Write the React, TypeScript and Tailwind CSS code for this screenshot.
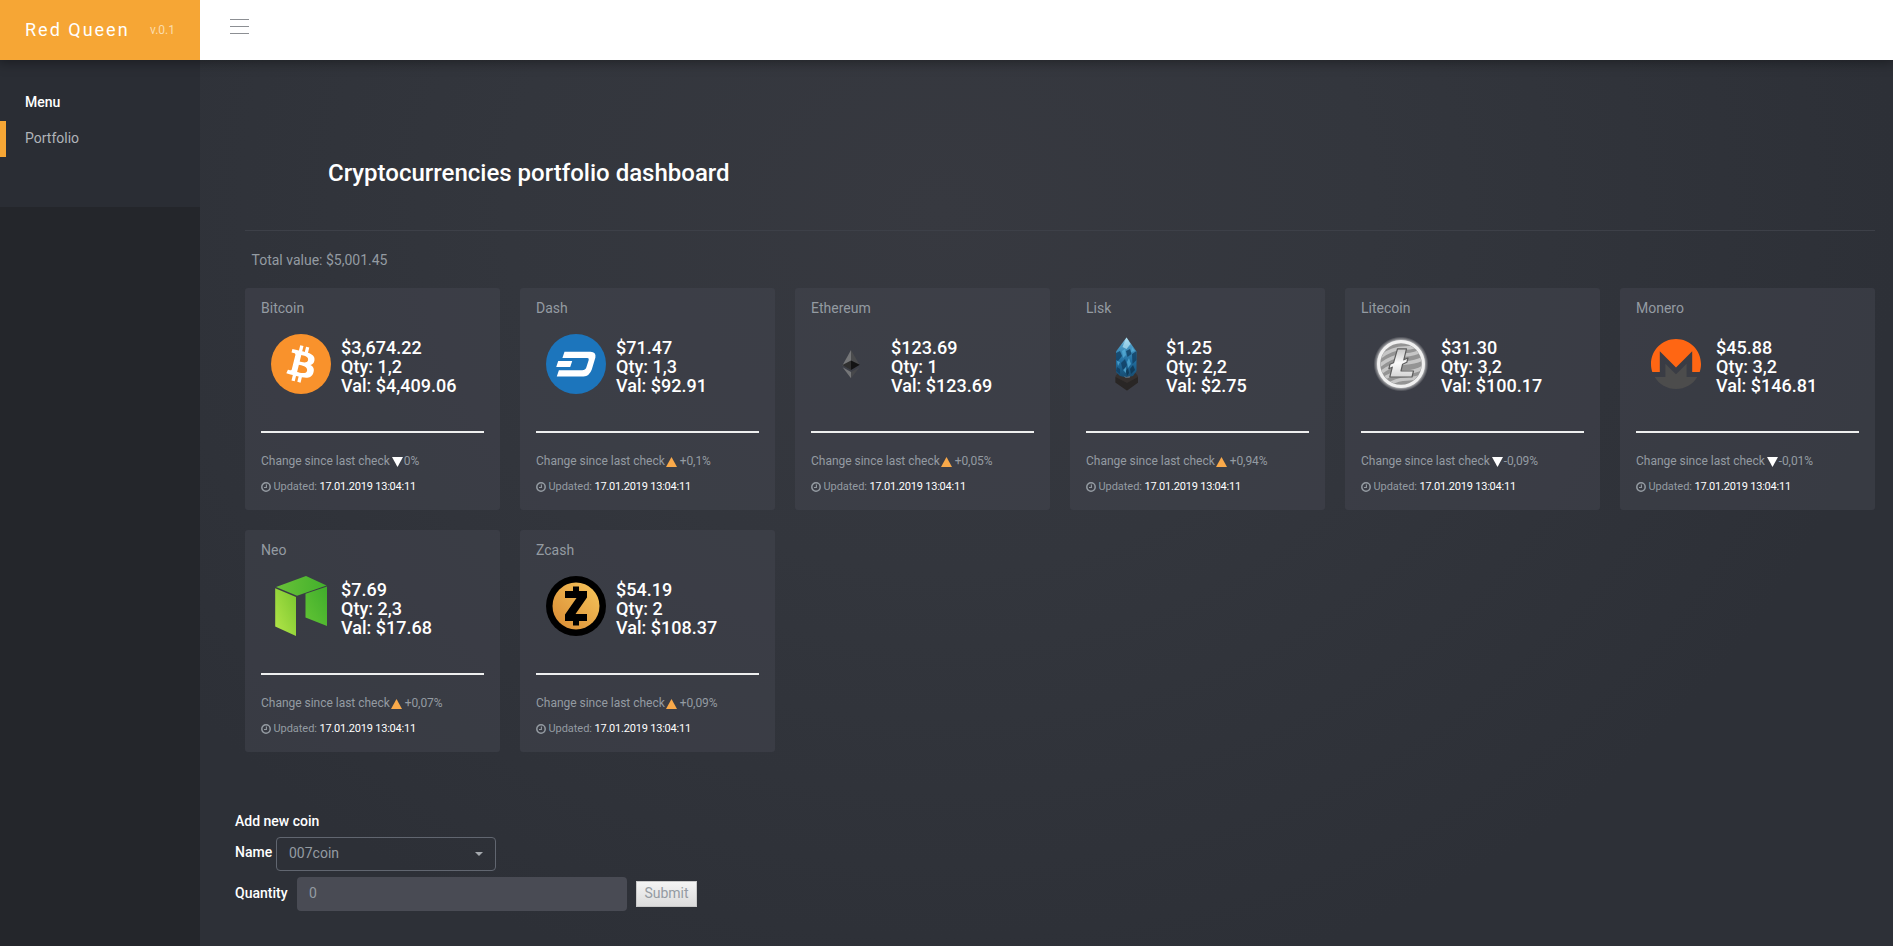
import React, { type ReactNode } from "react";

const BitcoinLogo = () => (
  <svg width="60" height="60" viewBox="0 0 32 32">
    <circle cx="16" cy="16" r="16" fill="#f9922c" />
    <path
      fill="#fff"
      d="M23.189 14.02c.314-2.096-1.283-3.223-3.465-3.975l.708-2.84-1.728-.43-.69 2.765c-.454-.114-.92-.22-1.385-.326l.695-2.783L15.596 6l-.708 2.839c-.376-.086-.746-.17-1.104-.26l.002-.009-2.384-.595-.46 1.846s1.283.294 1.256.312c.7.175.826.638.805 1.006l-.806 3.235c.048.012.11.03.18.057l-.183-.045-1.13 4.532c-.086.212-.303.531-.793.41.018.025-1.256-.313-1.256-.313l-.858 1.978 2.25.561c.418.105.828.215 1.231.318l-.715 2.872 1.727.43.708-2.84c.472.127.93.245 1.378.357l-.706 2.828 1.728.43.715-2.866c2.948.558 5.164.333 6.097-2.333.752-2.146-.037-3.385-1.588-4.192 1.13-.26 1.98-1.003 2.207-2.538zm-3.95 5.538c-.533 2.147-4.148.986-5.32.695l.95-3.805c1.172.293 4.929.872 4.37 3.11zm.535-5.569c-.487 1.953-3.495.96-4.47.717l.86-3.45c.975.243 4.118.696 3.61 2.733z"
    />
  </svg>
);

const DashLogo = () => (
  <svg width="60" height="60" viewBox="0 0 60 60">
    <circle cx="30" cy="30" r="30" fill="#1c75bc" />
    <path
      fill="#fff"
      fillRule="evenodd"
      d="M18.500 17.800H44.500Q50.300 18 49.400 23.500L45.800 35.500Q43.500 42 37.500 42.500H10.800L12.900 36.300H36.200Q39.300 36.300 40.300 33.500L42.700 26Q43.300 24 41.300 24H16.400z"
    />
    <path fill="#fff" d="M12.200 27h14l-2 6H10.200z" />
  </svg>
);

const EthereumLogo = () => (
  <svg width="60" height="60" viewBox="0 0 60 60">
    <path fill="#757678" d="M30 16v13.200l-8.600 2.300z" />
    <path fill="#4a4b4d" d="M30 16v13.200l8.800 2z" />
    <path fill="#303030" d="M30 26.500l-8.600 4.500L30 36z" />
    <path fill="#131313" d="M30 26.500l8.800 4.200L30 36z" />
    <path fill="#757678" d="M21.600 33.200L30 38v6.200z" />
    <path fill="#47484b" d="M38.600 33.200L30 38v6.200z" />
  </svg>
);

const LiskLogo = () => (
  <svg width="60" height="60" viewBox="0 0 60 60">
    <defs>
      <linearGradient id="crystal" x1="0" y1="0" x2="0" y2="1">
        <stop offset="0" stopColor="#a5d8ee" />
        <stop offset="0.2" stopColor="#4a9ac4" />
        <stop offset="0.6" stopColor="#206d9f" />
        <stop offset="1" stopColor="#174c70" />
      </linearGradient>
    </defs>
    <path fill="#35302e" d="M19.500 42l3-3.500h16.500l3 3.500v6.500l-11 8-11.500-8z" />
    <path fill="#292625" d="M19.500 43l11.500 6 11-6v5.500l-11 8-11.500-8z" />
    <path fill="url(#crystal)" d="M30.500 3.500L40.500 17.500V37l-3.500 5-7 1.500-6-1.500-4-4V17.500z" />
    <path fill="#b4e2f4" d="M30.500 3.500l-4 9.500 4 2 4-5z" opacity=".7" />
    <path fill="#123f61" d="M20 19l4-2 2 5-4 5-2-1zM36 20l4.500-3v9l-4 4zM25 29l4-4 2 6-4 6zM30 17l4-2 1.500 5-4 3zM21 33l3 2v5l-4-3z" opacity=".8" />
    <path fill="#58b0da" d="M26 17l3-2 1 6-3 3zM21 27l3 1-2 4zM33 24l2 6-3 4-1-6zM27 36l3-3 0 6zM36 13l3 4-4 1z" opacity=".7" />
    <path fill="#0d2f49" d="M34 35l3-4 2 5-4 4zM30 37l2-3 1 5-2 3z" opacity=".7" />
    <path fill="#7b8790" d="M27.500 41.500l3 1.500 4-1.500-1 2.500h-4z" opacity=".55" />
  </svg>
);

const LitecoinLogo = () => (
  <svg width="60" height="60" viewBox="0 0 60 60">
    <defs>
      <radialGradient id="coinGlow">
        <stop offset="0.86" stopColor="#e8e8e8" stopOpacity=".7" />
        <stop offset="1" stopColor="#c8c8c8" stopOpacity="0" />
      </radialGradient>
      <clipPath id="coinFace">
        <circle cx="30" cy="30" r="20.500" />
      </clipPath>
      <linearGradient id="coinMark" x1="0" y1="0" x2="0" y2="1">
        <stop offset="0" stopColor="#c4c4c4" />
        <stop offset="0.5" stopColor="#fafafa" />
        <stop offset="1" stopColor="#d4d4d4" />
      </linearGradient>
    </defs>
    <circle cx="30" cy="30" r="27.500" fill="url(#coinGlow)" />
    <circle cx="30" cy="30" r="24" fill="#f0f0f0" />
    <circle cx="30" cy="30" r="20.800" fill="#949494" />
    <g clipPath="url(#coinFace)" fill="none" stroke="#c6c6c6" strokeWidth="3.500">
      <path d="M8 24Q20 14 34 14T54 6" />
      <path d="M8 32Q20 22 34 21T56 13" />
      <path d="M8 40Q20 30 34 29T56 22" />
      <path d="M8 48Q20 38 34 38T56 30" />
      <path d="M12 54Q24 45 36 45T58 38" />
    </g>
    <path
      fill="url(#coinMark)"
      stroke="#5d5d5d"
      strokeWidth="1.200"
      strokeLinejoin="round"
      d="M26.500 14.800h9l-2.700 11 4.200-1.800-1.200 4.300-4.200 1.900-1.600 6.800h12.500l-1.500 6H18.800l2.500-9.800-3.400 1.500 1.100-4.400 3.500-1.500z"
    />
  </svg>
);

const MoneroLogo = () => (
  <svg width="60" height="60" viewBox="0 0 60 60">
    <path
      fill="#ff6613"
      d="M30 5C16.200 5 5 16.200 5 30c0 2.800.4 5.400 1.300 8h7.500V17.200L30 33.500l16.200-16.300V38h7.500c.9-2.600 1.300-5.200 1.300-8C55 16.200 43.800 5 30 5z"
    />
    <path
      fill="#4c4c4c"
      d="M26.600 36.900L19.400 29.700V43H8.700C13 50.200 21 55 30 55s17-4.800 21.300-12H40.600V29.700l-7.200 7.200-3.400 3.400z"
    />
  </svg>
);

const NeoLogo = () => (
  <svg width="60" height="60" viewBox="0 0 60 60">
    <defs>
      <linearGradient id="neoLeft" x1="1" y1="0" x2="0" y2="1">
        <stop offset="0" stopColor="#79c62f" />
        <stop offset="1" stopColor="#b4e649" />
      </linearGradient>
      <linearGradient id="neoTop" x1="0" y1="0" x2="1" y2="0">
        <stop offset="0" stopColor="#69c238" />
        <stop offset="1" stopColor="#42b02c" />
      </linearGradient>
      <linearGradient id="neoRight" x1="1" y1="0" x2="0" y2="1">
        <stop offset="0" stopColor="#40ad2c" />
        <stop offset="1" stopColor="#62c434" />
      </linearGradient>
    </defs>
    <path fill="url(#neoLeft)" d="M4.200 12.300L25 21v39L4.200 50.500z" />
    <path fill="url(#neoTop)" d="M5 11L35 0l20.600 9.500L26 19.800z" />
    <path fill="url(#neoRight)" d="M34.500 17.800L56 10.500v39.500l-21.500-8.500z" />
  </svg>
);

const ZcashLogo = () => (
  <svg width="60" height="60" viewBox="0 0 60 60">
    <defs>
      <linearGradient id="zcashFace" x1="1" y1="0" x2="0" y2="1">
        <stop offset="0" stopColor="#f6c65c" />
        <stop offset="1" stopColor="#d98a33" />
      </linearGradient>
    </defs>
    <circle cx="30" cy="30" r="30" fill="#000" />
    <circle cx="30" cy="30" r="23.500" fill="url(#zcashFace)" />
    <path
      fill="#000"
      d="M27 10.500h6V15h8v6.500L29.500 38H41v7h-8v4.500h-6V45h-8v-6.500L30.500 22H19v-7h8z"
    />
  </svg>
);

type Coin = {
  name: string;
  price: string;
  qty: string;
  value: string;
  change: string;
  up: boolean;
  logo: ReactNode;
};

const coins: Coin[] = [
  { name: "Bitcoin", price: "$3,674.22", qty: "1,2", value: "$4,409.06", change: "0%", up: false, logo: <BitcoinLogo /> },
  { name: "Dash", price: "$71.47", qty: "1,3", value: "$92.91", change: "+0,1%", up: true, logo: <DashLogo /> },
  { name: "Ethereum", price: "$123.69", qty: "1", value: "$123.69", change: "+0,05%", up: true, logo: <EthereumLogo /> },
  { name: "Lisk", price: "$1.25", qty: "2,2", value: "$2.75", change: "+0,94%", up: true, logo: <LiskLogo /> },
  { name: "Litecoin", price: "$31.30", qty: "3,2", value: "$100.17", change: "-0,09%", up: false, logo: <LitecoinLogo /> },
  { name: "Monero", price: "$45.88", qty: "3,2", value: "$146.81", change: "-0,01%", up: false, logo: <MoneroLogo /> },
  { name: "Neo", price: "$7.69", qty: "2,3", value: "$17.68", change: "+0,07%", up: true, logo: <NeoLogo /> },
  { name: "Zcash", price: "$54.19", qty: "2", value: "$108.37", change: "+0,09%", up: true, logo: <ZcashLogo /> },
];

const ClockIcon = () => (
  <svg className="mr-[2.5px] shrink-0" width="10" height="10" viewBox="0 0 10 10" fill="none" stroke="#949ba2">
    <circle cx="5" cy="5" r="4.200" strokeWidth="1.500" />
    <path d="M5.400 2.500v3H3" strokeWidth="1.100" />
  </svg>
);

function CoinCard({ coin }: { coin: Coin }) {
  return (
    <article className="flex h-[222px] flex-col rounded-[3px] bg-[#44464f]/50 px-4 pt-[10px]">
      <h2 className="text-sm leading-5">{coin.name}</h2>
      <div className="mt-4 flex h-[60px] pl-[10px]">
        <div className="h-[60px] w-[60px] shrink-0">{coin.logo}</div>
        <div className="ml-[10px] pt-1 text-lg leading-[19px] font-medium whitespace-nowrap text-white">
          <p>{coin.price}</p>
          <p>Qty: {coin.qty}</p>
          <p>Val: {coin.value}</p>
        </div>
      </div>
      <div className="mt-[37px] h-[2px] bg-[#eeefef]" />
      <div className="mt-5 flex h-4 items-center text-xs whitespace-nowrap">
        <span className="tracking-[-0.02px]">Change since last check</span>
        {coin.up ? (
          <svg className="mt-[1px] mr-[3px] ml-[1px]" width="11" height="10" viewBox="0 0 11 10">
            <path d="M5.500 0L11 10H0z" fill="#f9a94a" />
          </svg>
        ) : (
          <svg className="mt-[1px] mr-[1px] ml-[2px]" width="11" height="10" viewBox="0 0 11 10">
            <path d="M0 0h11L5.500 10z" fill="#fff" />
          </svg>
        )}
        <span className="tracking-[-0.08px]">{coin.change}</span>
      </div>
      <div className="mt-[10px] flex h-4 items-center text-[11px] whitespace-nowrap">
        <ClockIcon />
        <span className="tracking-[-0.05px]">Updated:</span>
        <span className="ml-[2.5px] tracking-[-0.2px] text-white">17.01.2019 13:04:11</span>
      </div>
    </article>
  );
}

export default function App() {
  return (
    <div className="flex h-[946px] w-full flex-col overflow-hidden bg-[#2d3037] font-[Roboto,sans-serif] text-sm text-[#949ba2]">
      <header className="z-10 flex h-[60px] shrink-0 bg-white shadow-[0_0_12px_2px_rgba(0,0,0,0.4)]">
        <div className="flex w-[200px] items-center bg-[#f6a635] pl-[25px]">
          <span className="w-[125px] text-lg tracking-[2px] text-white">Red Queen</span>
          <span className="text-xs text-[#fbdcac]">v.0.1</span>
        </div>
        <div className="flex flex-col gap-[6px] pt-[19px] pl-[30px]">
          <span className="h-px w-[19px] bg-[#8c8f93]" />
          <span className="h-px w-[19px] bg-[#8c8f93]" />
          <span className="h-px w-[19px] bg-[#8c8f93]" />
        </div>
      </header>

      <div className="flex flex-1">
        <aside className="w-[200px] shrink-0 bg-[#24262b]">
          <nav className="h-[147px] bg-[#2a2d34] pt-[25px]">
            <p className="h-9 pl-[25px] leading-[34px] font-medium text-white">Menu</p>
            <a className="block h-9 border-l-[6px] border-[#f6a635] pl-[19px] leading-[34px] text-[#b0b4b9]">Portfolio</a>
          </nav>
        </aside>

        <main className="flex-1 bg-[radial-gradient(ellipse_960px_800px_at_740px_150px,#373940_0%,#33363d_45%,#2d3037_100%)] pl-[35px]">
          <div className="ml-[10px] w-[1630px]">
            <div className="h-[171px] border-b border-[#3d4048] pt-[97px] pl-[83px]">
              <h1 className="text-2xl leading-8 font-medium text-white">Cryptocurrencies portfolio dashboard</h1>
            </div>
            <p className="mt-[19px] pl-[6.500px] leading-5">Total value: $5,001.45</p>
            <section className="mt-[18px] grid grid-cols-6 gap-5">
              {coins.map((coin) => (
                <CoinCard key={coin.name} coin={coin} />
              ))}
            </section>
          </div>

          <form className="mt-[59px] font-medium text-white">
            <p className="leading-5">Add new coin</p>
            <div className="mt-[6px] flex">
              <label className="w-[41px] pt-[5px] leading-5">Name</label>
              <div className="flex h-[34px] w-[220px] items-center justify-between rounded border border-[#616670] px-3 font-normal text-[#949ba2]">
                <span className="pb-[2px]">007coin</span>
                <svg width="8" height="4" viewBox="0 0 8 4">
                  <path d="M0 0h8L4 4z" fill="#a5a9ae" />
                </svg>
              </div>
            </div>
            <div className="mt-[6px] flex items-center">
              <label className="w-[62px] pb-[2px] leading-5">Quantity</label>
              <div className="flex h-[34px] w-[330px] items-center rounded bg-[#494b54] pb-[2px] pl-3 font-normal text-[#949ba2]">0</div>
              <button
                type="button"
                className="ml-[9px] h-[26px] w-[61px] border border-[#c9c9c9] bg-linear-to-b from-[#f4f4f4] to-[#dcdcdc] pb-[2px] leading-5 font-normal text-[#949ba2]"
              >
                Submit
              </button>
            </div>
          </form>
        </main>
      </div>
    </div>
  );
}
